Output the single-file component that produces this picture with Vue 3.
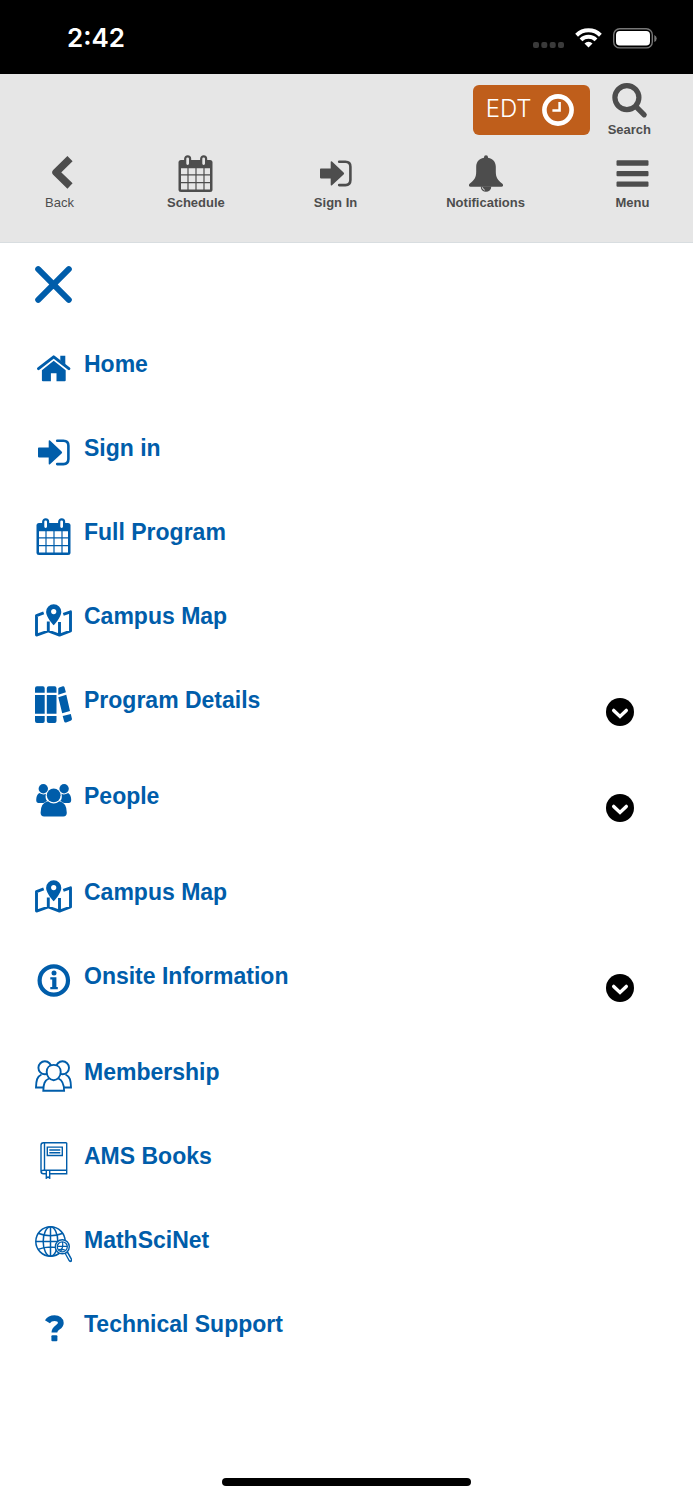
<script setup>
import { ref } from 'vue'

const actions = [
  { label: 'Back', icon: 'back', light: true },
  { label: 'Schedule', icon: 'calendar' },
  { label: 'Sign In', icon: 'signin' },
  { label: 'Notifications', icon: 'bell' },
  { label: 'Menu', icon: 'menu' },
]

const items = [
  { label: 'Home', icon: 'home' },
  { label: 'Sign in', icon: 'signin' },
  { label: 'Full Program', icon: 'calendar' },
  { label: 'Campus Map', icon: 'map' },
  { label: 'Program Details', icon: 'books', expandable: true },
  { label: 'People', icon: 'people', expandable: true },
  { label: 'Campus Map', icon: 'map' },
  { label: 'Onsite Information', icon: 'info', expandable: true },
  { label: 'Membership', icon: 'members' },
  { label: 'AMS Books', icon: 'book' },
  { label: 'MathSciNet', icon: 'globe' },
  { label: 'Technical Support', icon: 'question' },
]

const expanded = ref(null)
const toggle = (i) => {
  expanded.value = expanded.value === i ? null : i
}
</script>

<template>
  <div class="screen">
    <svg class="sprite" aria-hidden="true">
      <symbol id="back" viewBox="0 0 37 37">
        <path d="M29 3.600 15 17.300 29 31" fill="none" stroke="currentColor" stroke-width="7.400" stroke-linejoin="round" />
      </symbol>
      <symbol id="calendar" viewBox="0 0 37 37">
        <rect x="1.500" y="5" width="34" height="32" rx="2.500" fill="currentColor" />
        <g class="surface">
          <path d="M4 13.3h6.4v6H4zM11.6 13.3h6.8v6h-6.8zM19.6 13.3h6.8v6h-6.8zM27.6 13.3H33v6h-5.400zM4 20.500h6.400V27H4zM11.600 20.500h6.800V27h-6.800zM19.600 20.500h6.800V27h-6.800zM27.600 20.500H33V27h-5.400zM4 28.200h6.400v6.400H4zM11.600 28.200h6.800v6.400h-6.800zM19.600 28.200h6.800v6.400h-6.800zM27.600 28.200H33v6.400h-5.400z" />
        </g>
        <g class="surface" stroke="currentColor" stroke-width="2.200">
          <rect x="8.200" y="1.300" width="4.900" height="9.700" rx="2.400" />
          <rect x="24.200" y="1.300" width="4.900" height="9.700" rx="2.400" />
        </g>
      </symbol>
      <symbol id="signin" viewBox="0 0 37 37">
        <path d="M3.800 13.600h9.900V7.200q0-1.600 1.300-.6l11.600 10.800q1.100 1 0 2L15 30.200q-1.300 1-1.300-.6v-6.200H3.800q-.8 0-.8-.8v-8.200q0-.8.8-.8z" fill="currentColor" />
        <path d="M22.200 6.700h6.200q5 0 5 5v13.400q0 5-5 5h-6.200" fill="none" stroke="currentColor" stroke-width="2.600" stroke-linecap="round" />
      </symbol>
      <symbol id="bell" viewBox="0 0 37 37">
        <circle cx="19" cy="2.200" r="2" fill="currentColor" />
        <path d="M19 2.500c-5.600 0-9.800 3.700-9.800 9.200v5c0 6-2.200 8.700-6.600 12-1.300 1-.7 3 1 3h30.800c1.700 0 2.300-2 1-3-4.400-3.300-6.600-6-6.600-12v-5c0-5.500-4.200-9.200-9.800-9.200z" fill="currentColor" />
        <path d="M13.700 31.500a5.300 5.300 0 0 0 10.600 0z" fill="currentColor" />
        <path class="surface-line" d="M15.300 32.300q.4 2 2.500 2.900" fill="none" stroke-width="1" />
      </symbol>
      <symbol id="menu" viewBox="0 0 37 37">
        <path d="M3.500 5.300h30q1 0 1 1v3.400q0 1-1 1h-30q-1 0-1-1V6.300q0-1 1-1zM3.500 16h30q1 0 1 1v3.200q0 1-1 1h-30q-1 0-1-1V17q0-1 1-1zM3.500 26.400h30q1 0 1 1v3.400q0 1-1 1h-30q-1 0-1-1v-3.400q0-1 1-1z" fill="currentColor" />
      </symbol>
      <symbol id="search" viewBox="0 0 37 37">
        <circle cx="15.900" cy="15.600" r="12" fill="none" stroke="currentColor" stroke-width="5.200" />
        <path d="m25.500 25.200 7.700 7.600" stroke="currentColor" stroke-width="5.200" stroke-linecap="round" />
      </symbol>
      <symbol id="close" viewBox="0 0 37 37">
        <path d="m3.200 3.200 30.600 30.600M33.800 3.200 3.200 33.800" stroke="currentColor" stroke-width="6" stroke-linecap="round" />
      </symbol>
      <symbol id="home" viewBox="0 0 37 37">
        <path d="M25.300 5.700h5v9l-5-4.200z" fill="currentColor" />
        <path d="M3.500 18.600 18.700 6.900l15.200 11.700" fill="none" stroke="currentColor" stroke-width="3" stroke-linecap="round" stroke-linejoin="round" />
        <path d="m18.700 10.800 12 9.500v10q0 1-1 1h-8.200v-8h-5.600v8H7.900q-1 0-1-1v-10z" fill="currentColor" />
      </symbol>
      <symbol id="map" viewBox="0 0 37 37">
        <path d="M8.700 10.900 1.500 13.600v19.500l11.800-4.100 11.200 4.100 11-4.100V9.800l-7.200 2.500M13.300 19.500v9.500M24.500 20v13" fill="none" stroke="currentColor" stroke-width="2.900" stroke-linejoin="round" />
        <path d="M18.700 2.300a7.600 7.600 0 0 0-7.600 7.600c0 5.300 7.600 13.300 7.600 13.300s7.600-8 7.600-13.300a7.600 7.600 0 0 0-7.600-7.600z" fill="currentColor" />
        <circle class="surface" cx="18.700" cy="9.600" r="2.600" />
      </symbol>
      <symbol id="books" viewBox="0 0 37 37">
        <g fill="currentColor">
          <path id="volume" d="M2 .2h5.800q1.900 0 1.900 2v4.600H0V2.200q0-2 2-2zM0 9h9.700v18.800H0zM0 29.900h9.700v5q0 2-1.900 2H2q-2 0-2-2z" />
          <use href="#volume" x="11.800" />
          <path d="M23.300 4V2.500q.1-.8 1-1.100l3.500-1.100q1.300-.3 1.700 1l1.400 5L23.300 8.700zM23.300 11.200l8-2.400L35 25l-7.800 2.200zM27.700 30l8.100-2.100 1.100 4.500q.4 1.800-1.300 2.300l-4.500 1.800q-1.500.5-2-1.200z" />
        </g>
      </symbol>
      <symbol id="people" viewBox="0 0 37 37">
        <g fill="currentColor">
          <circle cx="8.300" cy="6.700" r="4.700" />
          <circle cx="29.100" cy="6.700" r="4.700" />
          <circle cx="18.700" cy="13.300" r="6.900" />
          <path d="M4.200 10.900q4 2.500 6.700.8-1.100 5 1.300 7.200-2.200.8-3.700 2H3.600Q1.200 20.900 1.200 18q0-5 3-7.100zM33.200 10.900q-4 2.500-6.700.8 1.100 5-1.300 7.200 2.200.8 3.700 2h4.900q2.400 0 2.400-2.900 0-5-3-7.100z" />
          <path d="M13 19.200q5.700 4.600 11.400 0 7.400 1.500 7.400 11.500 0 3.700-3.500 3.700H9.100q-3.500 0-3.500-3.700 0-10 7.400-11.500z" />
        </g>
      </symbol>
      <symbol id="info" viewBox="0 0 37 37">
        <circle cx="18.800" cy="18.500" r="14.200" fill="none" stroke="currentColor" stroke-width="4.200" />
        <circle cx="19" cy="10.900" r="2.500" fill="currentColor" />
        <path d="M15.300 15.300h6.100v9.600h1.400v2.300h-7.500v-2.300h1.900v-7.300h-1.900z" fill="currentColor" />
      </symbol>
      <symbol id="members" viewBox="0 0 37 37">
        <g class="surface" stroke="currentColor" stroke-width="1.900">
          <path d="M6.500 16.500C2 18.500 1.200 22.500 1 29.500h35c-.1-7-1-11-5.500-13" />
          <circle cx="9.900" cy="9.800" r="6.500" />
          <circle cx="27.500" cy="9.800" r="6.500" />
          <path d="M14 20.500c-4.500 2-5.600 5.500-5.700 12.300h20.800c0-6.800-1.200-10.300-5.700-12.300" />
          <path d="M18.700 6.900c-4.300 0-7 3-7 7 0 4.500 3.200 8.300 7 8.300s7-3.800 7-8.300c0-4-2.700-7-7-7z" />
        </g>
      </symbol>
      <symbol id="book" viewBox="0 0 37 37">
        <g fill="none" stroke="currentColor" stroke-width="1.400">
          <path d="M31.700.8H8.500Q6 .8 6 3.300v26q0 2.500 2.500 2.500h2.800M14.700 31.800h17V.8M9.500.8v27.600M6 30q.3-1.700 2.500-1.700h23.200M12.300 5.100h15v8.400h-15zM14.300 8h11M14.300 10.700h11M11.300 28.400v7.800l1.700-1.300 1.700 1.300v-7.800" />
        </g>
      </symbol>
      <symbol id="globe" viewBox="0 0 37 37">
        <g fill="none" stroke="currentColor" stroke-width="1.500">
          <circle cx="15.500" cy="15.500" r="14.700" />
          <ellipse cx="15.500" cy="15.500" rx="7.300" ry="14.700" />
          <path d="M15.500.8v29.400M.8 15.500h29.400M3 7.200q12.500 5 25 0M3 23.400q12.500-5 25 0" />
        </g>
        <path d="m31.200 26.300 4.200 7.800" stroke="currentColor" stroke-width="4" stroke-linecap="round" />
        <path class="surface-line" d="m31.800 27.800 3.400 6" stroke-width="1.300" stroke-linecap="round" />
        <circle class="surface" cx="27.300" cy="20.800" r="7" stroke="currentColor" stroke-width="1.400" />
        <circle cx="27.300" cy="20.800" r="5" fill="none" stroke="currentColor" stroke-width="1.300" />
        <path d="M22.500 20.300h9.600M27.500 16q1 5-2 9.500M23.500 23.700q3.500-1 7 .6" fill="none" stroke="currentColor" stroke-width="1.200" />
      </symbol>
      <symbol id="question" viewBox="0 0 37 37">
        <path d="M12.400 11.800C14 9.300 16.600 8.200 19.600 8.200c3.800 0 6.200 1.900 6.200 4.700 0 4.600-6.400 4.200-6.400 9.700" fill="none" stroke="currentColor" stroke-width="5.800" />
        <rect x="16.400" y="25.200" width="6" height="6" rx="1" fill="currentColor" />
      </symbol>
    </svg>

    <div class="status">
      <span class="time">2:42</span>
      <div class="indicators">
        <svg class="cell" viewBox="0 0 31 6" aria-label="No signal">
          <g fill="#3a3a3a">
            <rect width="6" height="6" rx="2" />
            <rect x="8.300" width="6" height="6" rx="2" />
            <rect x="16.700" width="6" height="6" rx="2" />
            <rect x="25" width="6" height="6" rx="2" />
          </g>
        </svg>
        <svg class="wifi" viewBox="0 0 27 20" aria-label="Wi-Fi">
          <g fill="none" stroke="#fff" stroke-width="4">
            <path d="M1.600 7.200a17 17 0 0 1 23.800 0" />
            <path d="M6 11.900a10.700 10.700 0 0 1 15 0" />
          </g>
          <path d="m13.500 19.600-4-4.200a5.700 5.700 0 0 1 8 0z" fill="#fff" />
        </svg>
        <svg class="battery" viewBox="0 0 44 21" aria-label="Battery full">
          <rect x=".7" y=".7" width="38.600" height="19.200" rx="6" fill="none" stroke="#777" stroke-width="1.400" />
          <rect x="3" y="3" width="34" height="14.600" rx="3.800" fill="#fff" />
          <path d="M41.300 7v7q2.400-1 2.400-3.500T41.300 7z" fill="#777" />
        </svg>
      </div>
    </div>

    <header class="header">
      <div class="tools">
        <button class="zone" type="button">
          <span>EDT</span>
          <svg class="clock" viewBox="0 0 32 32" aria-hidden="true">
            <circle cx="16" cy="16" r="13.600" fill="none" stroke="#fff" stroke-width="4.600" />
            <path d="M17.600 8v8.600h-7.200" fill="none" stroke="#fff" stroke-width="2.500" />
          </svg>
        </button>
        <button class="action" type="button">
          <svg class="icon" aria-hidden="true"><use href="#search" /></svg>
          <span>Search</span>
        </button>
      </div>
      <div class="actions">
        <button
          v-for="a in actions"
          :key="a.label"
          class="action"
          :class="{ light: a.light }"
          type="button"
        >
          <svg class="icon" aria-hidden="true"><use :href="'#' + a.icon" /></svg>
          <span>{{ a.label }}</span>
        </button>
      </div>
    </header>

    <nav class="menu" aria-label="Main menu">
      <button class="close" type="button" aria-label="Close menu">
        <svg class="icon" aria-hidden="true"><use href="#close" /></svg>
      </button>
      <ul class="list">
        <li v-for="(item, i) in items" :key="i" class="row">
          <a class="link" href="#">
            <svg class="icon" aria-hidden="true"><use :href="'#' + item.icon" /></svg>
            <span>{{ item.label }}</span>
          </a>
          <button
            v-if="item.expandable"
            class="toggle"
            type="button"
            :aria-label="'Expand ' + item.label"
            :aria-expanded="expanded === i"
            @click="toggle(i)"
          >
            <svg class="chevron" viewBox="0 0 28 28" aria-hidden="true">
              <circle cx="14" cy="14" r="14" />
              <path d="m7.700 12.400 6.300 6 6.300-6" fill="none" stroke="#fff" stroke-width="3.400" stroke-linecap="round" />
            </svg>
          </button>
        </li>
      </ul>
    </nav>

    <div class="home-bar"></div>
  </div>
</template>

<style>
body {
  margin: 0;
  background: #fff;
}
</style>

<style scoped>
.screen {
  --surface: #fff;
  display: flex;
  flex-direction: column;
  min-height: 100vh;
  font-family: "Liberation Sans", Arial, sans-serif;
  background: #fff;
}

.sprite {
  position: absolute;
  width: 0;
  height: 0;
}

.surface {
  fill: var(--surface);
}

.surface-line {
  stroke: var(--surface);
}

.icon {
  display: block;
  flex: none;
  width: 37px;
  height: 37px;
}

button {
  margin: 0;
  padding: 0;
  border: 0;
  background: none;
  color: inherit;
  font: inherit;
  cursor: pointer;
}

.status {
  display: flex;
  align-items: center;
  justify-content: space-between;
  box-sizing: border-box;
  height: 74px;
  padding: 2px 36px 0 67px;
  background: #000;
  color: #fff;
}

.time {
  font: 600 26px/32px Inter, sans-serif;
}

.indicators {
  display: flex;
  align-items: center;
  gap: 11px;
}

.cell {
  width: 31px;
  height: 6px;
  margin-top: 14px;
}

.wifi {
  width: 27px;
  height: 20px;
}

.battery {
  width: 44px;
  height: 21px;
}

.header {
  --surface: #e6e6e6;
  display: flex;
  flex-direction: column;
  gap: 17px;
  padding: 8px 42px 31px 41px;
  border-bottom: 1px solid #d8dde0;
  background: #e6e6e6;
  color: #4d4d4d;
}

.tools {
  display: flex;
  align-items: center;
  justify-content: flex-end;
  gap: 18px;
}

.zone {
  display: flex;
  align-items: center;
  justify-content: space-between;
  min-width: 117px;
  height: 50px;
  padding: 0 16px 0 13px;
  border-radius: 6px;
  background: #bf5e1b;
  color: #fff;
  font: 300 24px/28px Inter, sans-serif;
}

.zone span {
  padding-bottom: 3px;
}

.clock {
  width: 32px;
  height: 32px;
}

.actions {
  display: flex;
  justify-content: space-between;
}

.action {
  display: flex;
  flex-direction: column;
  align-items: center;
  gap: 3px;
  font-size: 13px;
  font-weight: 700;
  line-height: 16px;
}

.action.light {
  font-weight: 400;
}

.menu {
  padding: 23px 59px 0 35px;
  color: #005daa;
}

.close {
  display: block;
}

.list {
  margin: 47px 0 0;
  padding: 0;
  list-style: none;
}

.row {
  display: flex;
  align-items: flex-start;
  justify-content: space-between;
  padding-bottom: 47px;
}

.link {
  display: flex;
  gap: 12px;
  color: inherit;
  font-size: 23px;
  font-weight: 700;
  line-height: 28px;
  text-decoration: none;
}

.toggle {
  padding: 12px 0 9px;
  color: #000;
}

.chevron {
  display: block;
  width: 28px;
  height: 28px;
}

.home-bar {
  width: 36%;
  height: 8px;
  margin: auto auto 14px;
  border-radius: 4px;
  background: #000;
}
</style>
